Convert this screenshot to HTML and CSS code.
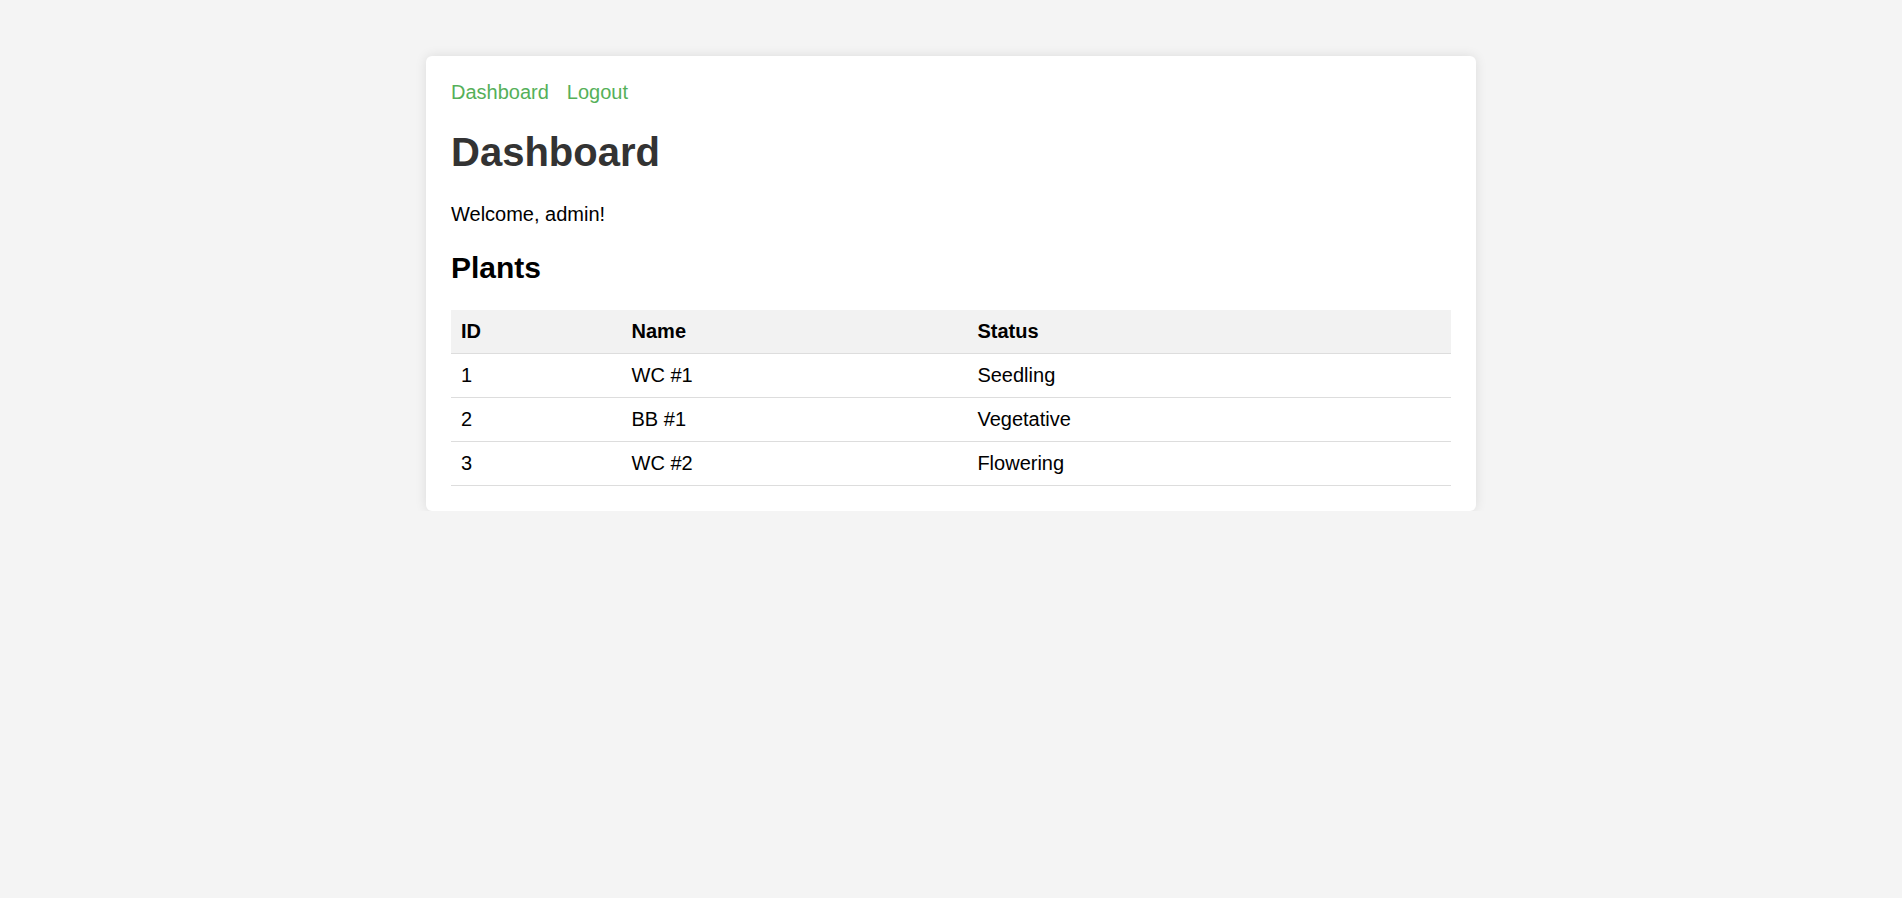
FILE: index.html
```html
<!DOCTYPE html>
<html>
<head>
<meta charset="utf-8">
<title>Dashboard</title>
<link rel="stylesheet" href="styles.css">
</head>
<body>
<div class="container">
  <nav class="nav">
    <a href="#" class="nav-link">Dashboard</a>
    <a href="#" class="nav-link">Logout</a>
  </nav>
  <h1 class="title">Dashboard</h1>
  <p class="welcome">Welcome, admin!</p>
  <h2 class="subtitle">Plants</h2>
  <table class="plants">
    <thead>
      <tr><th>ID</th><th>Name</th><th>Status</th></tr>
    </thead>
    <tbody>
      <tr><td>1</td><td>WC #1</td><td>Seedling</td></tr>
      <tr><td>2</td><td>BB #1</td><td>Vegetative</td></tr>
      <tr><td>3</td><td>WC #2</td><td>Flowering</td></tr>
    </tbody>
  </table>
</div>
</body>
</html>
```
FILE: styles.css
```css
html, body {
  margin: 0;
  padding: 0;
}
body {
  background: #f4f4f4;
  font-family: "Liberation Sans", Arial, sans-serif;
  font-size: 20px;
  color: #000;
  padding-top: 56px;
}
.container {
  width: 1000px;
  margin: 0 auto;
  padding: 25px;
  background: #fff;
  border-radius: 6px;
  box-shadow: 0 0 12px rgba(0, 0, 0, 0.1);
}
.nav {
  display: flex;
  gap: 18px;
}
.nav-link {
  color: #55b059;
  text-decoration: none;
}
.title {
  font-size: 40px;
  color: #333;
  margin: 26px 0 28px;
}
.welcome {
  margin: 0 0 25px;
}
.subtitle {
  font-size: 30px;
  margin: 0 0 25px;
}
.plants {
  width: 100%;
  border-collapse: collapse;
}
.plants th,
.plants td {
  padding: 10px;
  text-align: left;
  border-bottom: 1px solid #ddd;
}
.plants th {
  background: #f2f2f2;
  font-weight: bold;
}
```
